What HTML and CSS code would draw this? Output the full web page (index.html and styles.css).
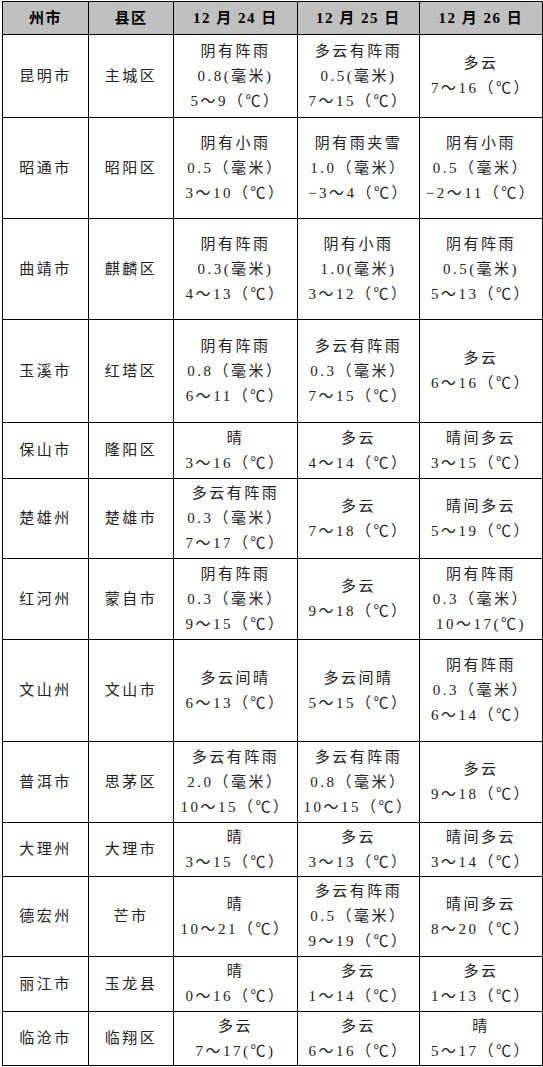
FILE: index.html
```html
<!DOCTYPE html>
<html lang="zh-CN">
<head>
<meta charset="utf-8">
<title>云南州市天气预报</title>
<link rel="stylesheet" href="styles.css">
</head>
<body>
<table class="forecast">
  <colgroup>
    <col class="c-city"><col class="c-county"><col class="c-day1"><col class="c-day2"><col class="c-day3">
  </colgroup>
  <thead>
    <tr class="head">
      <th>州市</th><th>县区</th><th>12 月 24 日</th><th>12 月 25 日</th><th>12 月 26 日</th>
    </tr>
  </thead>
  <tbody>
    <tr class="h83">
      <td>昆明市</td><td>主城区</td>
      <td>阴有阵雨<br>0.8(毫米)<br>5～9（℃）</td>
      <td>多云有阵雨<br>0.5(毫米)<br>7～15（℃）</td>
      <td>多云<br>7～16（℃）</td>
    </tr>
    <tr class="h101">
      <td>昭通市</td><td>昭阳区</td>
      <td>阴有小雨<br>0.5（毫米）<br>3～10（℃）</td>
      <td>阴有雨夹雪<br>1.0（毫米）<br>−3～4（℃）</td>
      <td>阴有小雨<br>0.5（毫米）<br>−2～11（℃）</td>
    </tr>
    <tr class="h101">
      <td>曲靖市</td><td>麒麟区</td>
      <td>阴有阵雨<br>0.3(毫米)<br>4～13（℃）</td>
      <td>阴有小雨<br>1.0(毫米)<br>3～12（℃）</td>
      <td>阴有阵雨<br>0.5(毫米)<br>5～13（℃）</td>
    </tr>
    <tr class="h103">
      <td>玉溪市</td><td>红塔区</td>
      <td>阴有阵雨<br>0.8（毫米）<br>6～11（℃）</td>
      <td>多云有阵雨<br>0.3（毫米）<br>7～15（℃）</td>
      <td>多云<br>6～16（℃）</td>
    </tr>
    <tr class="h56">
      <td>保山市</td><td>隆阳区</td>
      <td>晴<br>3～16（℃）</td>
      <td>多云<br>4～14（℃）</td>
      <td>晴间多云<br>3～15（℃）</td>
    </tr>
    <tr class="h80">
      <td>楚雄州</td><td>楚雄市</td>
      <td>多云有阵雨<br>0.3（毫米）<br>7～17（℃）</td>
      <td>多云<br>7～18（℃）</td>
      <td>晴间多云<br>5～19（℃）</td>
    </tr>
    <tr class="h81">
      <td>红河州</td><td>蒙自市</td>
      <td>阴有阵雨<br>0.3（毫米）<br>9～15（℃）</td>
      <td>多云<br>9～18（℃）</td>
      <td>阴有阵雨<br>0.3（毫米）<br>10～17(℃)</td>
    </tr>
    <tr class="h102">
      <td>文山州</td><td>文山市</td>
      <td>多云间晴<br>6～13（℃）</td>
      <td>多云间晴<br>5～15（℃）</td>
      <td>阴有阵雨<br>0.3（毫米）<br>6～14（℃）</td>
    </tr>
    <tr class="h81">
      <td>普洱市</td><td>思茅区</td>
      <td>多云有阵雨<br>2.0（毫米）<br>10～15（℃）</td>
      <td>多云有阵雨<br>0.8（毫米）<br>10～15（℃）</td>
      <td>多云<br>9～18（℃）</td>
    </tr>
    <tr class="h54">
      <td>大理州</td><td>大理市</td>
      <td>晴<br>3～15（℃）</td>
      <td>多云<br>3～13（℃）</td>
      <td>晴间多云<br>3～14（℃）</td>
    </tr>
    <tr class="h80">
      <td>德宏州</td><td>芒市</td>
      <td>晴<br>10～21（℃）</td>
      <td>多云有阵雨<br>0.5（毫米）<br>9～19（℃）</td>
      <td>晴间多云<br>8～20（℃）</td>
    </tr>
    <tr class="h55">
      <td>丽江市</td><td>玉龙县</td>
      <td>晴<br>0～16（℃）</td>
      <td>多云<br>1～14（℃）</td>
      <td>多云<br>1～13（℃）</td>
    </tr>
    <tr class="h54">
      <td>临沧市</td><td>临翔区</td>
      <td>多云<br>7～17(℃)</td>
      <td>多云<br>6～16（℃）</td>
      <td>晴<br>5～17（℃）</td>
    </tr>
  </tbody>
</table>
</body>
</html>
```

FILE: styles.css
```css
html, body {
  margin: 0;
  padding: 0;
  background: #ffffff;
}

body {
  padding: 1px 0 0 2px;
}

.forecast {
  border-collapse: collapse;
  table-layout: fixed;
  width: 540px;
  font-family: "Liberation Serif", "Noto Sans CJK SC", serif;
  font-size: 15px;
  line-height: 25px;
  color: #222222;
}

.c-city { width: 86px; }
.c-county { width: 85px; }
.c-day1 { width: 124px; }
.c-day2 { width: 122px; }
.c-day3 { width: 123px; }

.forecast th,
.forecast td {
  border: 1px solid #000000;
  padding: 0;
  text-align: center;
  vertical-align: middle;
  letter-spacing: 2.5px;
  white-space: nowrap;
}

.forecast th {
  background: #c0c0c0;
  color: #000000;
  font-weight: bold;
  font-size: 15px;
  letter-spacing: 1.5px;
}

.head { height: 33px; }
.h54 { height: 54px; }
.h55 { height: 55px; }
.h56 { height: 56px; }
.h80 { height: 80px; }
.h81 { height: 81px; }
.h83 { height: 83px; }
.h101 { height: 101px; }
.h102 { height: 102px; }
.h103 { height: 103px; }
```
